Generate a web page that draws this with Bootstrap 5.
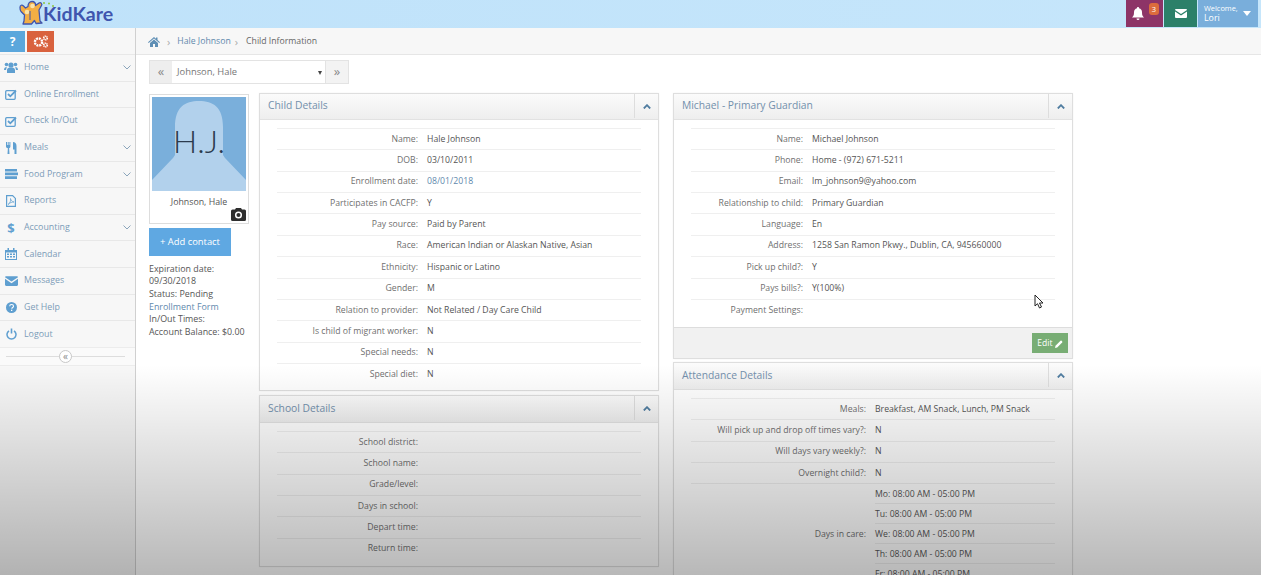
<!DOCTYPE html>
<html lang="en"><head><meta charset="utf-8"><title>KidKare</title>
<link href="https://cdn.jsdelivr.net/npm/bootstrap@5.3.0/dist/css/bootstrap.min.css" rel="stylesheet">
<style>
html,body{height:575px;overflow:hidden}
body{font-family:"Open Sans","Noto Sans",sans-serif;font-size:8.8px;color:#555;background:#fff;position:relative}
a{text-decoration:none}
.topbar{height:28px;background:linear-gradient(90deg,#bfe2fa,#c6e6fb);flex:none}
.logo-txt{font-family:"Lato",sans-serif;font-weight:700;font-size:19.6px;color:#3f55ae;line-height:27px;margin-left:0}
.topbtn{height:27px;color:#fff}
.tb-bell{width:37px;background:#8d3467;margin-right:1px}
.tb-mail{width:33px;background:#2c8069;margin-right:1px}
.tb-user{width:60px;background:#79aedb;font-size:8.8px;line-height:10px;padding:3px 0 0 6px;margin-right:3px}
.tb-user small{font-size:7.4px;display:block}
.badge-n{position:absolute;top:3px;left:23px;width:10px;height:12px;background:#dc6c3c;border-radius:3px;font-size:7.5px;line-height:12px;text-align:center}
.sidebar{width:136px;flex:none;background:#f7f7f7;border-right:1px solid #d0d0d0}
.sb-top{height:26px;padding-top:2.500px;gap:2px}
.sb-help{width:25px;height:21px;background:#5ba7dc;color:#fff;font-weight:700;font-size:12px;line-height:21px;text-align:center}
.sb-gear{width:27px;height:21px;background:#d9623e;display:flex;align-items:center;justify-content:center}
.sb-item{height:26.65px;border-top:1px solid #e8e8e8;padding-left:1px;color:#7c9cb8;font-size:8.85px;display:flex;align-items:center}
.sb-ico{width:20px;display:flex;justify-content:center;flex:none}
.sb-name{margin-left:3px}
.sb-chev{margin-left:auto;margin-right:4px}
.sb-collapse{height:19px;background:#fafafa;border-top:1px solid #ececec;border-bottom:1px solid #ececec;position:relative;display:flex;align-items:center;justify-content:center}
.sb-collapse:before{content:"";position:absolute;left:6px;right:10px;top:8px;border-top:1px solid #ddd}
.sb-round{position:relative;width:13px;height:13px;border:1px solid #c8c8c8;border-radius:50%;background:#fff;font-size:10px;line-height:10px;text-align:center;color:#888;margin-right:4px}
.crumbs{height:27px;background:#f7f7f7;border-bottom:1px solid #e6e6e6;padding:1px 0 0 12px;font-size:8.7px;color:#666}
.crumbs a{color:#5f89ad}
.crumbs .sep{color:#aaa;font-size:11px;line-height:11px}
.picker{margin:5px 0 0 13px;height:24px;width:200px;border:1px solid #e3e3e3;background:#fff}
.picker-arrow{width:22px;background:#eee;color:#888;text-align:center;font-size:13px;line-height:20px}
.picker-val{flex:1;padding-left:5px;font-size:9.4px;line-height:22px;color:#777;position:relative;border-right:1px solid #e3e3e3}
.picker-val i{position:absolute;right:3px;top:10px;border:2.500px solid transparent;border-top:4px solid #444;border-bottom:0}
.main-row{padding-left:13px;margin-top:9px;gap:10px}
.leftcol{width:100px;flex:none;padding-top:1px}
.photo{border:1px solid #ddd;height:130px;padding:2px;position:relative;background:#fff}
.photo-img{height:94px;background:#7aafdb;position:relative;overflow:hidden;display:block}
.photo-nm{text-align:center;color:#555;font-size:8.800px;margin-top:4.500px}
.cam{position:absolute;right:2px;bottom:2px;width:15px;height:13px;display:block}
.addbtn{display:block;width:82px;height:28px;margin-top:4px;background:#5fa8e2;color:#fff;font-size:9.400px;line-height:27px;text-align:center}
.meta{margin-top:6.500px;font-size:8.9px;line-height:12.7px;color:#555;white-space:nowrap}
.meta a{color:#5f89ad}
.pnl{border:1px solid #dedede;background:#fff;box-shadow:0 0 2px rgba(0,0,0,.05)}
.pnl-head{height:26px;background:linear-gradient(#fbfbfb,#eee);border-bottom:1px solid #e2e2e2;display:flex;align-items:center;padding:0 0 2px 8px;font-size:10.3px;color:#7390ac;position:relative}
.pnl-tog{position:absolute;right:0;top:0;width:24px;border-left:1px solid #ddd;display:flex;align-items:center;justify-content:center;height:24px}
.pnl-body{padding:8px 17px 0 17px}
.pnl-low .pnl-head{height:27px;padding-bottom:0}
.rw{display:flex;height:21.36px;border-top:1px solid #efefef;align-items:center;font-size:8.7px;white-space:nowrap}
.rw .lb{flex:none;text-align:right;color:#6f6f6f}
.rw .vl{color:#555;padding-left:9px}
.w-a .lb{width:141px}.w-b .lb{width:112px}.w-c .lb{width:175px}
.colm,.colr{width:400px;flex:none}
.colr{margin-left:4px}
.foot{height:31px;background:#f1f1f1;border-top:1px solid #ddd;display:flex;justify-content:flex-end;align-items:center;padding-right:4px;margin-top:7px}
.editbtn{width:36px;height:20px;background:#78ad74;color:#fff;font-size:8.6px;line-height:20px;text-align:center}
.dy{display:flex;border-top:1px solid #efefef;font-size:8.7px}
.dy .lb{width:175px;flex:none;text-align:right;color:#6f6f6f;align-self:center}
.dy .vl{flex:1;padding-left:9px;color:#555;white-space:nowrap}
.dy .vl div{height:20px;line-height:20px;border-bottom:1px solid #efefef}
.cursor{position:absolute;left:1034px;top:294px}
.shade{position:absolute;left:0;right:0;top:365px;height:210px;background:linear-gradient(rgba(0,0,0,0),rgba(0,0,0,.28));pointer-events:none}
.stack>*{margin-bottom:3px}
.stack>.pnl-gap{margin-bottom:4px}
</style></head><body>
<div class="d-flex flex-column" style="height:575px">
<div class="topbar d-flex align-items-start">
 <div class="d-flex" style="padding-left:19px">
  <svg width="24" height="24" viewBox="0 0 24 24" style="overflow:visible;margin-top:1px"><path d="M1 6.500C1 4 3 3.500 4.500 5L6.500 7 9 5.500c0-3 1.500-5 4-5s4 2 3.500 4L20 2c2-1 3.500 1 2.500 2.500L20 9l1 11 2 2-6 .5-1.500-3-3 3.500L4 23l1-3 .5-6L2 10.500C1 9 1 8 1 6.500z" fill="#f3ae45" stroke="#3f55ae" stroke-width="1.300" stroke-linejoin="round"/><circle cx="8" cy="11" r="2.300" fill="#fbe3a8"/><circle cx="13.500" cy="5" r="2.300" fill="#fbe3a8"/><path d="M11 10v9" stroke="#3f55ae" stroke-width="1"/><circle cx="25" cy="2" r="1" fill="#8cc63f"/><circle cx="30" cy="2.500" r="1" fill="#8cc63f"/><circle cx="34" cy="5" r="1" fill="#8cc63f"/></svg>
  <span class="logo-txt">KidKare</span>
 </div>
 <div class="ms-auto d-flex">
  <div class="topbtn tb-bell position-relative d-flex align-items-center" style="padding-left:6px">
   <svg width="12" height="13" viewBox="0 0 12 13"><path d="M6 0a1 1 0 0 1 1 1.200c2 .5 3 2 3 4 0 3 .6 4 2 5.300H0C1.400 9.200 2 8.200 2 5.200c0-2 1-3.500 3-4A1 1 0 0 1 6 0zM4.500 11.500h3a1.500 1.500 0 0 1-3 0z" fill="#fff"/></svg>
   <span class="badge-n">3</span>
  </div>
  <div class="topbtn tb-mail d-flex align-items-center justify-content-center">
   <svg width="12" height="9" viewBox="0 0 12 9"><path d="M0 1a1 1 0 0 1 1-1h10a1 1 0 0 1 1 1L6 5zM0 2.500V8a1 1 0 0 0 1 1h10a1 1 0 0 0 1-1V2.500L6 6.500z" fill="#fff"/></svg>
  </div>
  <div class="topbtn tb-user position-relative"><small>Welcome,</small>Lori<svg class="position-absolute" style="right:7px;top:11px" width="8" height="5" viewBox="0 0 8 5"><path d="M0 0h8L4 5z" fill="#fff"/></svg></div>
 </div>
</div>
<div class="d-flex flex-grow-1" style="min-height:0">
 <aside class="sidebar">
  <div class="sb-top d-flex">
   <div class="sb-help">?</div>
   <div class="sb-gear"><svg width="16" height="13" viewBox="0 0 16 13"><circle cx="5.500" cy="7" r="3.600" fill="none" stroke="#fff" stroke-width="2.400" stroke-dasharray="2 .8"/><circle cx="12.500" cy="3" r="1.800" fill="none" stroke="#fff" stroke-width="1.600" stroke-dasharray="1.200 .5"/><circle cx="12.500" cy="10" r="1.800" fill="none" stroke="#fff" stroke-width="1.600" stroke-dasharray="1.200 .5"/></svg></div>
  </div>
  <div class="sb-item"><span class="sb-ico"><svg width="14" height="11" viewBox="0 0 14 11" fill="#5f9fd0"><circle cx="7" cy="3" r="2.600"/><circle cx="2.500" cy="2.500" r="1.800"/><circle cx="11.500" cy="2.500" r="1.800"/><path d="M3 11V8c0-2 2-2.500 4-2.500S11 6 11 8v3zM0 8c0-2 1-3 2.800-3L2 8zM14 8c0-2-1-3-2.800-3l.8 3z"/></svg></span><span class="sb-name">Home</span><svg class="sb-chev" width="8" height="5" viewBox="0 0 8 5"><path d="M.5.500 4 4 7.500.500" fill="none" stroke="#8ba5bb" stroke-width="1"/></svg></div>
  <div class="sb-item"><span class="sb-ico"><svg width="12" height="11" viewBox="0 0 12 11"><rect x=".7" y="1.700" width="9.500" height="8.600" rx="1" fill="none" stroke="#5f9fd0" stroke-width="1.300"/><path d="M3 5l2.300 2.300L11 1.500" fill="none" stroke="#5f9fd0" stroke-width="1.800"/></svg></span><span class="sb-name">Online Enrollment</span></div>
  <div class="sb-item"><span class="sb-ico"><svg width="12" height="11" viewBox="0 0 12 11"><rect x=".7" y="1.700" width="9.500" height="8.600" rx="1" fill="none" stroke="#5f9fd0" stroke-width="1.300"/><path d="M3 5l2.300 2.300L11 1.500" fill="none" stroke="#5f9fd0" stroke-width="1.800"/></svg></span><span class="sb-name">Check In/Out</span></div>
  <div class="sb-item"><span class="sb-ico"><svg width="11" height="12" viewBox="0 0 11 12" fill="#5f9fd0"><path d="M0 0h1v3h.7V0h1v3h.7V0h1v4.500c0 1-.8 1.500-1.300 1.700L3.500 12h-2l.4-5.800C1 6 0 5.500 0 4.500zM7 0c2 0 3.500 1.500 3.500 4v8h-2V7.500H7z"/></svg></span><span class="sb-name">Meals</span><svg class="sb-chev" width="8" height="5" viewBox="0 0 8 5"><path d="M.5.500 4 4 7.500.500" fill="none" stroke="#8ba5bb"/></svg></div>
  <div class="sb-item"><span class="sb-ico"><svg width="13" height="10" viewBox="0 0 13 10" fill="#5f9fd0"><path d="M0 0h12v2.500H0zM0 3.500h8v-.1h5v2.900H0zM0 7.300h12V10H0z"/></svg></span><span class="sb-name">Food Program</span><svg class="sb-chev" width="8" height="5" viewBox="0 0 8 5"><path d="M.5.500 4 4 7.500.500" fill="none" stroke="#8ba5bb"/></svg></div>
  <div class="sb-item"><span class="sb-ico"><svg width="10" height="12" viewBox="0 0 10 12"><path d="M.6.600h6l2.800 2.800v8H.6z" fill="none" stroke="#5f9fd0" stroke-width="1.200"/><path d="M2 9.500c2-1 3-4 2.500-6 .5 2 1.500 3 3.500 3.500-2 0-4 .5-6 2.500z" fill="none" stroke="#5f9fd0" stroke-width=".7"/></svg></span><span class="sb-name">Reports</span></div>
  <div class="sb-item"><span class="sb-ico" style="color:#5f9fd0;font-size:13px;font-weight:700;line-height:12px">$</span><span class="sb-name">Accounting</span><svg class="sb-chev" width="8" height="5" viewBox="0 0 8 5"><path d="M.5.500 4 4 7.500.500" fill="none" stroke="#8ba5bb"/></svg></div>
  <div class="sb-item"><span class="sb-ico"><svg width="12" height="12" viewBox="0 0 12 12" fill="#5f9fd0"><path d="M0 2h2.500V0h1.500v2h4V0h1.500v2H12v10H0zM1 4.500v6.500h10V4.500z"/><path d="M2 5.500h2v1.500H2zM5 5.500h2v1.500H5zM8 5.500h2v1.500H8zM2 8h2v1.500H2zM5 8h2v1.500H5zM8 8h2v1.500H8z"/></svg></span><span class="sb-name">Calendar</span></div>
  <div class="sb-item"><span class="sb-ico"><svg width="13" height="10" viewBox="0 0 12 9"><path d="M0 1a1 1 0 0 1 1-1h10a1 1 0 0 1 1 1L6 5zM0 2.500V8a1 1 0 0 0 1 1h10a1 1 0 0 0 1-1V2.500L6 6.500z" fill="#5f9fd0"/></svg></span><span class="sb-name">Messages</span></div>
  <div class="sb-item"><span class="sb-ico"><svg width="11" height="11" viewBox="0 0 11 11"><circle cx="5.500" cy="5.500" r="5.500" fill="#5f9fd0"/><path d="M3.700 4.200c0-2.200 3.800-2.200 3.800 0 0 1.300-1.700 1.300-1.700 2.500" fill="none" stroke="#fff" stroke-width="1.100"/><rect x="5" y="7.700" width="1.300" height="1.300" fill="#fff"/></svg></span><span class="sb-name">Get Help</span></div>
  <div class="sb-item"><span class="sb-ico"><svg width="11" height="12" viewBox="0 0 11 12"><path d="M3 2.800a4.500 4.500 0 1 0 5 0" fill="none" stroke="#5f9fd0" stroke-width="1.500"/><path d="M5.500.500v5" stroke="#5f9fd0" stroke-width="1.600"/></svg></span><span class="sb-name">Logout</span></div>
  <div class="sb-collapse"><span class="sb-round">«</span></div>
 </aside>
 <main class="flex-grow-1" style="min-width:0">
  <div class="crumbs d-flex align-items-center">
   <svg width="12" height="10" viewBox="0 0 12 10"><path d="M6 0l2 1.700V.6h1.500v2.400L12 5.200l-.7.800L6 1.500.7 6 0 5.200zM2 6l4-3.500L10 6v4H7V7H5v3H2z" fill="#5f8fb5"/></svg>
   <span class="sep" style="margin:0 7px 0 7px">›</span><a href="#">Hale Johnson</a><span class="sep" style="margin:0 8px 0 4px">›</span><span>Child Information</span>
  </div>
  <div class="picker d-flex">
   <div class="picker-arrow">«</div>
   <div class="picker-val">Johnson, Hale<i></i></div>
   <div class="picker-arrow" style="background:#f3f3f3">»</div>
  </div>
  <div class="main-row d-flex align-items-start">
   <div class="leftcol">
    <div class="photo">
     <div class="photo-img"><svg width="94" height="94" viewBox="0 0 94 94"><path d="M23 30C23 10 33 4 47 4s24 6 24 26v28l2 3L94 83v11H0V83l21-22 2-3z" fill="#b2d1ec"/></svg><span class="position-absolute top-50 start-50" style="transform:translate(-50%,-57%);font-family:'Lato',sans-serif;font-weight:300;font-size:32px;color:#2b3a4d;white-space:nowrap">H.J.</span></div>
     <div class="photo-nm">Johnson, Hale</div>
     <svg class="cam" viewBox="0 0 15 13"><path d="M5 0h5l1 1.500h2.500A1.500 1.500 0 0 1 15 3v8.500a1.500 1.500 0 0 1-1.500 1.500h-12A1.500 1.500 0 0 1 0 11.500V3a1.500 1.500 0 0 1 1.500-1.500H4z" fill="#2e2e2e"/><circle cx="7.500" cy="7" r="2.800" fill="none" stroke="#fff" stroke-width="1.500"/></svg>
    </div>
    <a class="addbtn" href="#">+ Add contact</a>
    <div class="meta">Expiration date:<br>09/30/2018<br>Status: Pending<br><a href="#">Enrollment Form</a><br>In/Out Times:<br>Account Balance: $0.00</div>
   </div>
   <div class="colm stack">
    <section class="pnl pnl-gap" style="height:298px">
     <div class="pnl-head">Child Details<span class="pnl-tog"><svg width="8" height="5" viewBox="0 0 8 5"><path d="M.8 4.500 4 1.200l3.200 3.300" fill="none" stroke="#507da0" stroke-width="1.800"/></svg></span></div>
     <div class="pnl-body w-a">
      <div class="rw"><span class="lb">Name:</span><span class="vl">Hale Johnson</span></div>
      <div class="rw"><span class="lb">DOB:</span><span class="vl">03/10/2011</span></div>
      <div class="rw"><span class="lb">Enrollment date:</span><span class="vl"><a href="#" style="color:#5f89ad">08/01/2018</a></span></div>
      <div class="rw"><span class="lb">Participates in CACFP:</span><span class="vl">Y</span></div>
      <div class="rw"><span class="lb">Pay source:</span><span class="vl">Paid by Parent</span></div>
      <div class="rw"><span class="lb">Race:</span><span class="vl">American Indian or Alaskan Native, Asian</span></div>
      <div class="rw"><span class="lb">Ethnicity:</span><span class="vl">Hispanic or Latino</span></div>
      <div class="rw"><span class="lb">Gender:</span><span class="vl">M</span></div>
      <div class="rw"><span class="lb">Relation to provider:</span><span class="vl">Not Related / Day Care Child</span></div>
      <div class="rw"><span class="lb">Is child of migrant worker:</span><span class="vl">N</span></div>
      <div class="rw"><span class="lb">Special needs:</span><span class="vl">N</span></div>
      <div class="rw"><span class="lb">Special diet:</span><span class="vl">N</span></div>
     </div>
    </section>
    <section class="pnl pnl-low" style="height:172px">
     <div class="pnl-head">School Details<span class="pnl-tog"><svg width="8" height="5" viewBox="0 0 8 5"><path d="M.8 4.500 4 1.200l3.200 3.300" fill="none" stroke="#507da0" stroke-width="1.800"/></svg></span></div>
     <div class="pnl-body w-a">
      <div class="rw"><span class="lb">School district:</span></div>
      <div class="rw"><span class="lb">School name:</span></div>
      <div class="rw"><span class="lb">Grade/level:</span></div>
      <div class="rw"><span class="lb">Days in school:</span></div>
      <div class="rw"><span class="lb">Depart time:</span></div>
      <div class="rw"><span class="lb">Return time:</span></div>
     </div>
    </section>
   </div>
   <div class="colr stack">
    <section class="pnl" style="height:266px">
     <div class="pnl-head">Michael - Primary Guardian<span class="pnl-tog"><svg width="8" height="5" viewBox="0 0 8 5"><path d="M.8 4.500 4 1.200l3.200 3.300" fill="none" stroke="#507da0" stroke-width="1.800"/></svg></span></div>
     <div class="pnl-body w-b">
      <div class="rw"><span class="lb">Name:</span><span class="vl">Michael Johnson</span></div>
      <div class="rw"><span class="lb">Phone:</span><span class="vl">Home - (972) 671-5211</span></div>
      <div class="rw"><span class="lb">Email:</span><span class="vl">lm_johnson9@yahoo.com</span></div>
      <div class="rw"><span class="lb">Relationship to child:</span><span class="vl">Primary Guardian</span></div>
      <div class="rw"><span class="lb">Language:</span><span class="vl">En</span></div>
      <div class="rw"><span class="lb">Address:</span><span class="vl">1258 San Ramon Pkwy., Dublin, CA, 945660000</span></div>
      <div class="rw"><span class="lb">Pick up child?:</span><span class="vl">Y</span></div>
      <div class="rw"><span class="lb">Pays bills?:</span><span class="vl">Y(100%)</span></div>
      <div class="rw"><span class="lb">Payment Settings:</span></div>
     </div>
     <div class="foot"><a class="editbtn" href="#">Edit <svg width="8" height="8" viewBox="0 0 8 8"><path d="M0 8l.5-2.200L5.500.8a.8.800 0 0 1 1.100 0l.6.600a.8.800 0 0 1 0 1.100L2.200 7.500z" fill="#fff"/></svg></a></div>
    </section>
    <section class="pnl pnl-low" style="height:300px">
     <div class="pnl-head">Attendance Details<span class="pnl-tog"><svg width="8" height="5" viewBox="0 0 8 5"><path d="M.8 4.500 4 1.200l3.200 3.300" fill="none" stroke="#507da0" stroke-width="1.800"/></svg></span></div>
     <div class="pnl-body w-c">
      <div class="rw"><span class="lb">Meals:</span><span class="vl">Breakfast, AM Snack, Lunch, PM Snack</span></div>
      <div class="rw"><span class="lb">Will pick up and drop off times vary?:</span><span class="vl">N</span></div>
      <div class="rw"><span class="lb">Will days vary weekly?:</span><span class="vl">N</span></div>
      <div class="rw"><span class="lb">Overnight child?:</span><span class="vl">N</span></div>
      <div class="dy"><span class="lb">Days in care:</span><div class="vl"><div>Mo: 08:00 AM - 05:00 PM</div><div>Tu: 08:00 AM - 05:00 PM</div><div>We: 08:00 AM - 05:00 PM</div><div>Th: 08:00 AM - 05:00 PM</div><div>Fr: 08:00 AM - 05:00 PM</div></div></div>
     </div>
    </section>
   </div>
  </div>
 </main>
</div>
</div>
<svg class="cursor" width="10" height="16" viewBox="0 0 10 16"><path d="M1 1v11l2.500-2.300L5.500 14l2-1-2-4H9z" fill="#fff" stroke="#222" stroke-width="1"/></svg>
<div class="shade"></div>
</body></html>
